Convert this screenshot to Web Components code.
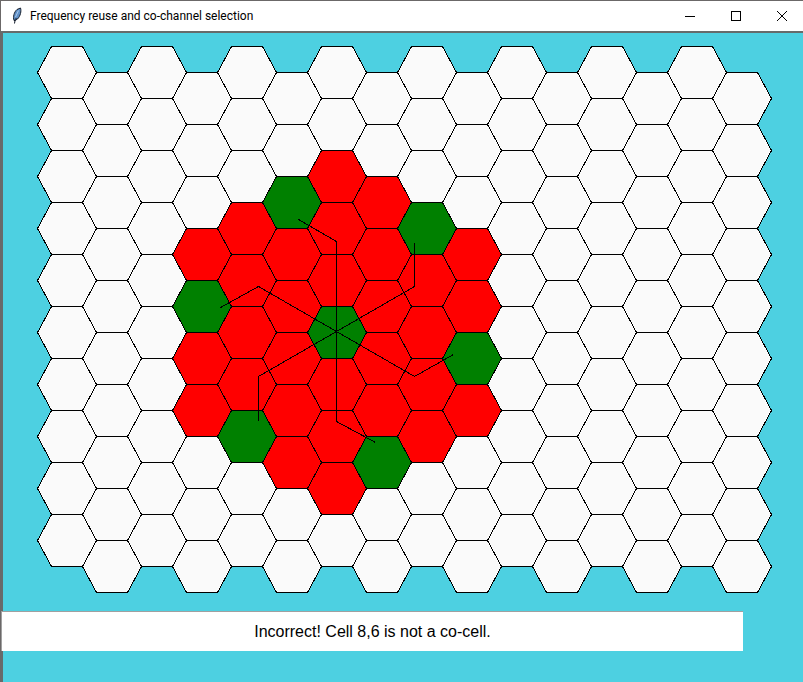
<!DOCTYPE html>
<html lang="en">
<head>
<meta charset="utf-8">
<title>Frequency reuse and co-channel selection</title>
<style>
html, body { height: 100%; margin: 0; }
body { font-family: "Liberation Sans", Arial, sans-serif; overflow: hidden; background: #4dd0e1; }
</style>
</head>
<body>
<app-window>
  <title-bar slot="title">Frequency reuse and co-channel selection</title-bar>
  <cell-map></cell-map>
  <status-message slot="status">Incorrect! Cell 8,6 is not a co-cell.</status-message>
</app-window>

<script>
class AppWindow extends HTMLElement {
  constructor() {
    super();
    this.attachShadow({ mode: "open" }).innerHTML = `
      <style>
        :host { display: flex; flex-direction: column; box-sizing: border-box; min-height: 100vh;
                border-top: 1px solid #6b6868; border-left: 1px solid #6b6868; background: #4dd0e1; }
        main { border-top: 2px solid #666b6b; border-left: 2px solid #666b6b; padding: 12px 30px 17px 32px; overflow: hidden; }
        .rest { flex: 1; border-left: 2px solid #666b6b; }
      </style>
      <slot name="title"></slot>
      <main><slot></slot></main>
      <slot name="status"></slot>
      <div class="rest"></div>`;
  }
}

class TitleBar extends HTMLElement {
  constructor() {
    super();
    this.attachShadow({ mode: "open" }).innerHTML = `
      <style>
        :host { display: flex; align-items: center; height: 30px; background: #fff; color: #000;
                font: 12px/16px Roboto, "Noto Sans", sans-serif; }
        .icon { width: 16px; height: 18px; margin: 0 5px 0 8px; flex: none; }
        h1 { flex: 1; margin: 0; font: inherit; white-space: nowrap; overflow: hidden; }
        button { width: 46px; height: 30px; padding: 0; border: 0; background: none; display: grid; place-items: center; flex: none; }
        button:hover { background: #e5e5e5; }
        .controls { display: flex; margin-right: -2px; }
      </style>
      <svg class="icon" viewBox="0 0 16 18" aria-hidden="true">
        <path d="M5 13.500C3.800 10 5 5 8 2.500L11.500 1C12.500 4 11.500 9 8.500 12L6 13.500Z" fill="#5f8fc6" stroke="#17202e"/>
        <path d="M7.500 11L6.200 12.500L5.500 16.500" fill="none" stroke="#101828"/>
        <path d="M9.500 3.500L6.500 10" stroke="#a9c8ea"/>
      </svg>
      <h1><slot></slot></h1>
      <div class="controls">
        <button aria-label="Minimize"><svg width="10" height="10" shape-rendering="crispEdges"><path d="M0 5.500H10" stroke="#000"/></svg></button>
        <button aria-label="Maximize"><svg width="10" height="10" shape-rendering="crispEdges"><path d="M.5.5H9.500V9.500H.5Z" fill="none" stroke="#000"/></svg></button>
        <button aria-label="Close"><svg width="10" height="10"><path d="M0 0L10 10M10 0L0 10" stroke="#000"/></svg></button>
      </div>`;
  }
}

/* Flat-topped hexagon grid: 16 columns of 10 cells, odd columns half a cell lower. */
class CellMap extends HTMLElement {
  constructor() {
    super();
    const red = { 3: [3, 5, 6], 4: [3, 4, 5, 6], 5: [3, 4, 5, 6, 7], 6: [2, 3, 4, 6, 7, 8],
                  7: [2, 3, 4, 5, 6], 8: [4, 5, 6, 7], 9: [3, 4, 6] };
    const green = { 3: 4, 4: 7, 5: 2, 6: 5, 7: 7, 8: 3, 9: 5 };
    const groups = { plain: "", red: "", green: "" };
    for (let c = 0; c < 16; c++) {
      for (let r = 0; r < 10; r++) {
        const x = c * 45 + 1, y = r * 52 + (c % 2) * 26;
        const kind = green[c] === r ? "green" : (red[c] || []).includes(r) ? "red" : "plain";
        groups[kind] += `<path d="M${x} ${y + 26}l14 -26h31l14 26l-14 26h-31z"/>`;
      }
    }
    this.attachShadow({ mode: "open" }).innerHTML = `
      <style>
        :host { display: block; }
        svg { display: block; overflow: visible; }
        path { stroke: #000; stroke-width: 1; }
        .plain { fill: #fafafa; } .red { fill: #f00; } .green { fill: #008000; }
        .routes { fill: none; }
      </style>
      <svg width="738" height="549" viewBox="-1.500 -1.500 738 549" shape-rendering="crispEdges" role="img" aria-label="Cell grid">
        <g class="red">${groups.red}</g>
        <g class="plain">${groups.plain}</g>
        <g class="green">${groups.green}</g>
        <path class="routes" d="M300 285V195L262 173M300 285L378 240V196M300 285L378 330L417 308M300 285V375L339 396M300 285L222 330V374M300 285L222 240L184 261"/>
      </svg>`;
  }
}

class StatusMessage extends HTMLElement {
  constructor() {
    super();
    this.attachShadow({ mode: "open" }).innerHTML = `
      <style>
        :host { display: block; box-sizing: border-box; margin-right: 60px; padding: 11px 0 10px;
                border-top: 1px solid #a0a0a0; border-left: 1px solid #a0a0a0; background: #fff;
                color: #000; font-size: 16px; line-height: 18px; text-align: center; }
        output { display: block; }
      </style>
      <output><slot></slot></output>`;
  }
}

customElements.define("app-window", AppWindow);
customElements.define("title-bar", TitleBar);
customElements.define("cell-map", CellMap);
customElements.define("status-message", StatusMessage);
</script>
</body>
</html>
